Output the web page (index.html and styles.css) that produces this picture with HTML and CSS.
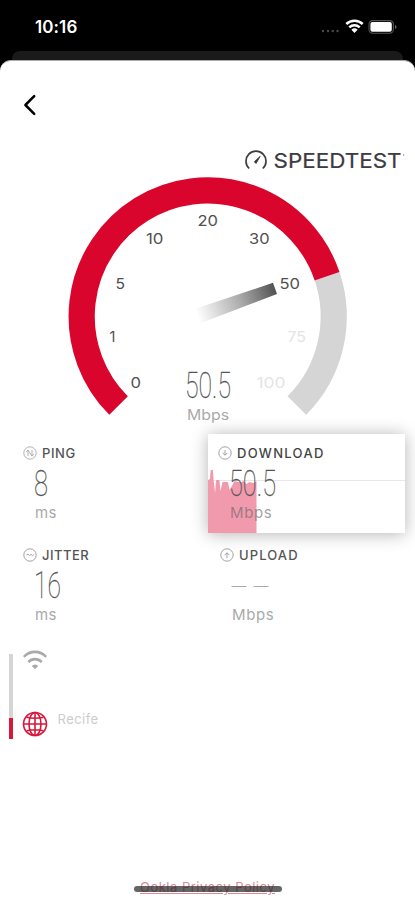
FILE: index.html
```html
<!DOCTYPE html>
<html lang="en">
<head>
<meta charset="utf-8">
<meta name="viewport" content="width=device-width, initial-scale=1">
<title>Speedtest</title>
<link rel="stylesheet" href="styles.css">
</head>
<body>
<div class="phone">
  <header class="status">
    <span class="clock">10:16</span>
    <svg class="indicators" width="78" height="18" viewBox="0 0 78 18">
      <g fill="#4b4b4b"><circle cx="4" cy="13" r="1.2"/><circle cx="9" cy="13" r="1.2"/><circle cx="13.7" cy="13" r="1.2"/><circle cx="18.5" cy="13" r="1.2"/></g>
      <g fill="none" stroke="#fff" stroke-width="2.5"><path d="M27.3 6a12 12 0 0 1 16.4 0"/><path d="M30.3 9.3a7.7 7.7 0 0 1 10.4 0"/></g>
      <path d="M32.4 11.7a4.5 4.5 0 0 1 6.2 0L35.5 15z" fill="#fff"/>
      <rect x="50" y="2.6" width="24.4" height="12.6" rx="3.6" fill="none" stroke="#555" stroke-width="1.1"/>
      <rect x="51.4" y="4" width="21.4" height="9.8" rx="2" fill="#fff"/>
      <path d="M76 7v4q1.6-.5 1.6-2T76 7z" fill="#666"/>
    </svg>
  </header>
  <div class="peek"></div>
  <main class="sheet">
    <nav class="back">
      <svg width="16" height="22" viewBox="0 0 16 22"><path d="M13.2 2.2 4.4 11l8.8 8.8" fill="none" stroke="#000" stroke-width="2.5" stroke-linecap="round" stroke-linejoin="round"/></svg>
    </nav>
    <div class="brand">
      <svg width="164" height="26" viewBox="242 148 164 26">
        <path d="M249.2 168.5A10 10 0 1 1 262.8 168.5" fill="none" stroke="#3c3c42" stroke-width="1.7"/>
        <path d="m254.3 161.8 5.9-5.5-4.2 7.2z" fill="#333" stroke="#333" stroke-width=".8"/>
        <text class="wordmark" x="273.5" y="168.3" textLength="128" lengthAdjust="spacingAndGlyphs">SPEEDTEST</text>
        <circle cx="403.6" cy="155" r=".7" fill="#888"/>
      </svg>
    </div>
    <svg class="gauge" width="415" height="256" viewBox="0 174 415 256">
      <defs>
        <linearGradient id="needle" gradientUnits="userSpaceOnUse" x1="197" y1="315" x2="276" y2="288">
          <stop offset="0" stop-color="#fff"/><stop offset=".15" stop-color="#e9e9e9"/><stop offset=".55" stop-color="#aaa"/><stop offset="1" stop-color="#505050"/>
        </linearGradient>
      </defs>
      <g fill="none" stroke-width="26.2">
        <path d="M327.1 276.3A126 126 0 0 1 296.8 405.6" stroke="#d5d5d5"/>
        <path d="M118.6 405.6A126 126 0 1 1 327.1 276.3" stroke="#d9052c"/>
      </g>
      <path d="M196 308.5 273 282.8 277 294 201 323z" fill="url(#needle)"/>
      <g class="ticks">
        <text x="130.5" y="388" textLength="10.5" lengthAdjust="spacingAndGlyphs">0</text>
        <text x="109.5" y="341.5">1</text>
        <text x="115.5" y="288.5" textLength="9.5" lengthAdjust="spacingAndGlyphs">5</text>
        <text x="146" y="243.5" textLength="17.5" lengthAdjust="spacingAndGlyphs">10</text>
        <text x="197.5" y="225.5" textLength="20.5" lengthAdjust="spacingAndGlyphs">20</text>
        <text x="249" y="243.5" textLength="20.5" lengthAdjust="spacingAndGlyphs">30</text>
        <text x="279.5" y="288.5" textLength="20.5" lengthAdjust="spacingAndGlyphs">50</text>
        <text class="faint" x="287.5" y="341.5" textLength="18.5" lengthAdjust="spacingAndGlyphs">75</text>
        <text class="faint" x="256.5" y="388" textLength="29" lengthAdjust="spacingAndGlyphs">100</text>
      </g>
      <text class="digits" x="185" y="398" textLength="46" lengthAdjust="spacingAndGlyphs">50.5</text>
      <text class="unit-svg" x="187" y="419.5" textLength="42" lengthAdjust="spacingAndGlyphs">Mbps</text>
    </svg>
    <section class="metrics">
      <article class="metric">
        <h2><svg width="14" height="14" viewBox="0 0 14 14"><g fill="none" stroke="#aaa" stroke-width=".9"><circle cx="7" cy="7" r="6.2"/><path d="M5 10V4L3.2 6M9 4v6l1.8-2M5 4l4 6"/></g></svg><span class="ping">PING</span></h2>
        <svg class="value" width="80" height="34" viewBox="0 0 80 34"><text class="digits" x="-1" y="29.5" textLength="14" lengthAdjust="spacingAndGlyphs">8</text></svg>
        <p class="ms">ms</p>
      </article>
      <article class="metric card">
        <svg class="chart" width="197" height="99" viewBox="0 0 197 99"><path d="M0 46.5h197" stroke="#e7e7e7"/><path d="M0 99V46l2-1 .7-9h2.2l.8 11 1.4 12L8 46h3.5l1 11 2-9h5.5l1.5 8 3-5 2-4 4 1 3 0 2-1 3 3 3-2 4 1 3-2V99z" fill="#f19aae"/></svg>
        <h2><svg width="14" height="14" viewBox="0 0 14 14"><g fill="none" stroke="#999" stroke-width=".9"><circle cx="7" cy="7" r="6.2"/><path d="M7 4v5M4.6 6.8 7 9.3l2.4-2.5"/></g></svg><span class="download">DOWNLOAD</span></h2>
        <svg class="value" width="80" height="34" viewBox="0 0 80 34"><text class="digits" x="-1" y="29.5" textLength="47" lengthAdjust="spacingAndGlyphs">50.5</text></svg>
        <p>Mbps</p>
      </article>
      <article class="metric">
        <h2><svg width="14" height="14" viewBox="0 0 14 14"><g fill="none" stroke="#999" stroke-width=".9"><circle cx="7" cy="7" r="6.2"/><path d="m3.5 7 1.5-.8L6.5 7.6 8 6.3 9.4 7.6l1.2-.8"/></g></svg><span class="jitter">JITTER</span></h2>
        <svg class="value" width="80" height="34" viewBox="0 0 80 34"><text class="digits" x="-1" y="29.5" textLength="27" lengthAdjust="spacingAndGlyphs">16</text></svg>
        <p class="ms">ms</p>
      </article>
      <article class="metric upload-metric">
        <h2><svg width="14" height="14" viewBox="0 0 14 14"><g fill="none" stroke="#999" stroke-width=".9"><circle cx="7" cy="7" r="6.2"/><path d="M7 10V5M4.6 7.2 7 4.7l2.4 2.5"/></g></svg><span class="upload">UPLOAD</span></h2>
        <svg class="value" width="80" height="34" viewBox="0 0 80 34"><path d="M-.5 18.5h15M21.500 18.5h15" stroke="#aaa"/></svg>
        <p>Mbps</p>
      </article>
    </section>
    <section class="connection">
      <div class="progress"></div>
      <div class="nodes">
        <svg width="26" height="20" viewBox="0 0 28 20" preserveAspectRatio="none"><g fill="none" stroke="#aaa" stroke-width="2.6"><path d="M2 6.8a17 17 0 0 1 24 0"/><path d="M6.8 12.1a10.3 10.3 0 0 1 14.4 0"/></g><path d="M10.500 16a4.8 4.800 0 0 1 7 0L14 19.3z" fill="#aaa"/></svg>
        <div class="server"><svg width="26" height="26" viewBox="0 0 26 26"><g fill="none" stroke="#d8173b" stroke-width="1.6"><circle cx="13" cy="13" r="11.5"/><ellipse cx="13" cy="13" rx="6" ry="11.5"/><path d="M13 2v22M2 13h22M4.500 6.200q8.500 2 17 0M4.500 19.800q8.500-2 17 0"/></g></svg><span>Recife</span></div>
      </div>
    </section>
    <footer class="policy"><a>Ookla Privacy Policy</a><i class="home-bar"></i></footer>
  </main>
</div>
</body>
</html>
```
FILE: styles.css
```css
* { box-sizing: border-box; margin: 0; padding: 0; }
svg { display: block; flex: none; overflow: visible; }
body { background: #000; font-family: Inter, "Liberation Sans", sans-serif; }
.phone { width: 415px; height: 900px; display: flex; flex-direction: column; overflow: hidden; background: #000; }
.status { height: 51px; display: flex; justify-content: space-between; padding: 18px 18px 0 35px; color: #fff; }
.clock { font-size: 17px; line-height: 19px; font-weight: 600; letter-spacing: .1px; }
.peek { height: 9px; margin: 0 12px; background: #1a1a1a; border-radius: 8px 8px 0 0; }
.sheet { flex: 1; background: #fff; border-radius: 11px 11px 0 0; display: flex; flex-direction: column; border-top: 1px solid #aaa; }
.back { height: 87px; padding: 33px 0 0 21px; }
.brand { height: 26px; padding-left: 242px; }
.wordmark { font-size: 20.5px; font-weight: 400; fill: #3c3c42; stroke: #3c3c42; stroke-width: .2px; }
.ticks { font-size: 14.5px; fill: #505050; }
.ticks .faint { fill: #e4e4e4; }
.digits { font-family: Roboto, sans-serif; font-size: 37.5px; font-weight: 100; fill: #555; stroke: #555; stroke-width: .3px; }
.unit-svg { font-size: 14.5px; fill: #aaa; }
.metrics { height: 210px; margin-top: 4px; padding: 0 10px 0 13px; display: grid; grid-template-columns: 195px 197px; grid-template-rows: 99px 99px; row-gap: 2.500px; }
.metric { padding: 12px 0 0 10px; }
.metric h2 { display: flex; align-items: center; gap: 5px; height: 14px; font-size: 13px; line-height: 14px; font-weight: 500; color: #555; }
.metric .value { margin: 6px 0 0 12px; }
.metric p { margin: 4px 0 0 12px; font-size: 15px; line-height: 17px; color: #aaa; letter-spacing: .65px; }
.metric .ms { letter-spacing: .3px; }
.card { position: relative; background: #fff; box-shadow: 0 1px 16px rgba(0, 0, 0, .3); }
.card > * { position: relative; }
.card .chart { position: absolute; left: 0; top: 0; }
.card h2 { color: #444; }
.card p { color: rgba(100, 100, 100, .6); }
.upload-metric { padding-left: 12px; }
.metric .ping { letter-spacing: .6px; }
.metric .jitter { letter-spacing: .5px; }
.metric .download { letter-spacing: 1.3px; }
.metric .upload { letter-spacing: 1.1px; }
.connection { height: 90px; margin-top: 10px; padding-left: 9px; display: flex; gap: 9px; }
.progress { width: 4px; height: 85px; background: linear-gradient(#d5d5d5 64px, #d8173b 64px); }
.nodes { margin-top: -4px; }
.server { display: flex; align-items: center; gap: 9.500px; margin-top: 41px; }
.server span { font-size: 13px; line-height: 16px; color: #ccc; letter-spacing: .45px; margin-top: -11px; }
.policy { margin-top: auto; height: 22px; position: relative; text-align: center; }
.policy a { display: block; font-size: 13px; line-height: 19px; letter-spacing: .5px; color: #df879a; text-decoration: underline; }
.home-bar { position: absolute; left: 134px; top: 8px; width: 148px; height: 5.500px; border-radius: 3px; background: rgba(35, 35, 35, .7); }
```
